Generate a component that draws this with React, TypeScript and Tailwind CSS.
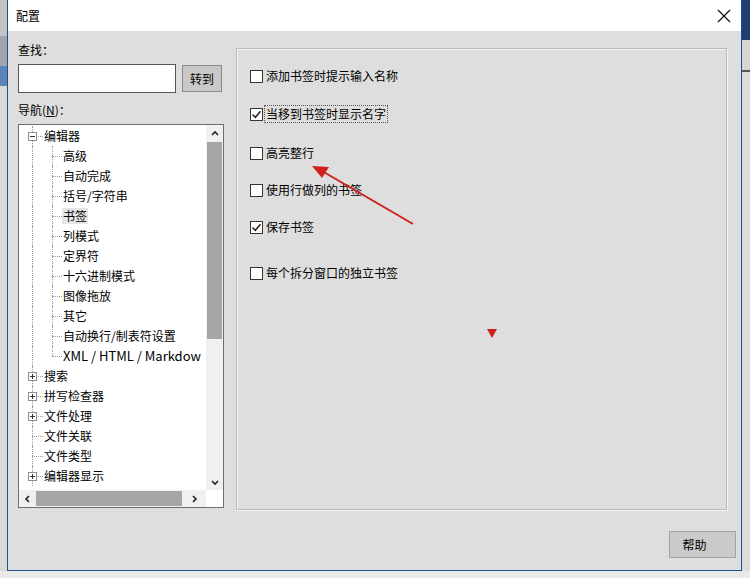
import React from "react";

const font = { fontFamily: '"Noto Sans CJK SC", "Noto Sans", sans-serif' };

type Node = { label: string; level: 0 | 1; box?: "minus" | "plus"; last?: boolean; selected?: boolean; latin?: boolean };

const nodes: Node[] = [
  { label: "编辑器", level: 0, box: "minus" },
  { label: "高级", level: 1 },
  { label: "自动完成", level: 1 },
  { label: "括号/字符串", level: 1 },
  { label: "书签", level: 1, selected: true },
  { label: "列模式", level: 1 },
  { label: "定界符", level: 1 },
  { label: "十六进制模式", level: 1 },
  { label: "图像拖放", level: 1 },
  { label: "其它", level: 1 },
  { label: "自动换行/制表符设置", level: 1 },
  { label: "XML / HTML / Markdow", level: 1, last: true, latin: true },
  { label: "搜索", level: 0, box: "plus" },
  { label: "拼写检查器", level: 0, box: "plus" },
  { label: "文件处理", level: 0, box: "plus" },
  { label: "文件关联", level: 0 },
  { label: "文件类型", level: 0 },
  { label: "编辑器显示", level: 0, box: "plus" },
];

function ExpandBox({ kind }: { kind: "minus" | "plus" }) {
  return (
    <div className="relative z-10 w-[9px] h-[9px] border border-[#8f8f8f] bg-white flex items-center justify-center">
      <div className="absolute w-[5px] h-px bg-[#333]" />
      {kind === "plus" && <div className="absolute w-px h-[5px] bg-[#333]" />}
    </div>
  );
}

function TreeRow({ n }: { n: Node }) {
  return (
    <div className="flex h-[20px] items-stretch whitespace-nowrap">
      <div className="relative w-[24px] shrink-0">
        <div className="absolute left-[13px] top-0 bottom-0 border-l border-dotted border-[#9a9a9a]" />
        {n.level === 0 && (
          <>
            <div className="absolute left-[13px] right-0 top-[10px] border-t border-dotted border-[#9a9a9a]" />
            {n.box && (
              <div className="absolute left-[9px] top-[6px]">
                <ExpandBox kind={n.box} />
              </div>
            )}
          </>
        )}
      </div>
      {n.level === 1 && (
        <div className="relative w-[19px] shrink-0">
          <div
            className={`absolute left-[9px] top-0 border-l border-dotted border-[#9a9a9a] ${n.last ? "h-[10px]" : "bottom-0"}`}
          />
          <div className="absolute left-[9px] right-0 top-[10px] border-t border-dotted border-[#9a9a9a]" />
        </div>
      )}
      <div className="flex items-center">
        <span
          className={`px-px leading-[16px] text-black ${n.latin ? "text-[13px]" : "text-[12px]"} ${n.selected ? "bg-[#e6e6e6]" : ""}`}
        >
          {n.label}
        </span>
      </div>
    </div>
  );
}

function Chevron({ dir }: { dir: "up" | "down" | "left" | "right" }) {
  const d =
    dir === "up"
      ? "M2 6 L5 3 L8 6"
      : dir === "down"
      ? "M2 4 L5 7 L8 4"
      : dir === "left"
      ? "M6 2 L3 5 L6 8"
      : "M4 2 L7 5 L4 8";
  return (
    <svg width="10" height="10" viewBox="0 0 10 10">
      <path d={d} fill="none" stroke="#222" strokeWidth="1.6" />
    </svg>
  );
}

function Checkbox({ checked, label, focus }: { checked?: boolean; label: string; focus?: boolean }) {
  return (
    <div className="flex items-center h-[20px]">
      <div className="w-[13px] h-[13px] border border-[#333] bg-white flex items-center justify-center shrink-0">
        {checked && (
          <svg width="11" height="11" viewBox="0 0 11 11">
            <path d="M1.5 5.5 L4.3 8.3 L9.5 2.2" fill="none" stroke="#222" strokeWidth="1.5" />
          </svg>
        )}
      </div>
      <span
        className={`ml-[2px] text-[12px] leading-[16px] text-black px-px ${focus ? "outline outline-1 outline-dotted outline-[#555]" : ""}`}
      >
        {label}
      </span>
    </div>
  );
}

export default function App() {
  return (
    <div className="relative w-[750px] h-[578px] overflow-hidden bg-[#e9e9e9] flex" style={font}>
      <div className="w-[7px] h-[571px] bg-[#d0d0d0] flex flex-col shrink-0">
        <div className="h-[36px] bg-[#c4c4c4]" />
        <div className="h-[30px] bg-[#9fa6ad]" />
        <div className="h-[20px] bg-[#5d86b8]" />
        <div className="flex-1 bg-[#d9d9d9]" />
      </div>

      <div className="w-[735px] h-[571px] shrink-0 border-l border-r border-b border-[#1f4f8c] flex flex-col bg-[#dedede]">
        <div className="h-[31px] bg-white flex items-center justify-between pl-[8px] pr-[8px] shrink-0">
          <span className="text-[12px] leading-[16px] text-black">配置</span>
          <svg width="14" height="14" viewBox="0 0 14 14" className="mr-[2px]">
            <path d="M1 1 L13 13 M13 1 L1 13" stroke="#111" strokeWidth="1.2" />
          </svg>
        </div>

        <div className="flex-1 flex flex-col">
          <div className="flex pl-[10px]">
            <div className="w-[206px] flex flex-col pt-[12px]">
              <div className="text-[12px] leading-[14px] text-black">查找：</div>
              <div className="mt-[7px] flex items-start">
                <div className="w-[158px] h-[29px] bg-white border border-[#555]" />
                <div className="ml-[6px] mt-px w-[40px] h-[27px] bg-[#c9c9c9] border border-[#8a8a8a] flex items-center justify-center text-[12px] text-black">
                  转到
                </div>
              </div>
              <div className="mt-[10px] text-[12px] leading-[14px] text-black">
                导航(<span className="underline">N</span>)：
              </div>
              <div className="mt-[7px] h-[384px] border border-[#6e6e6e] bg-white flex flex-col">
                <div className="flex flex-1 min-h-0">
                  <div className="flex-1 min-w-0 overflow-hidden pt-px">
                    {nodes.map((n, i) => (
                      <TreeRow key={i} n={n} />
                    ))}
                  </div>
                  <div className="w-[17px] bg-[#f0f0f0] flex flex-col items-center">
                    <div className="h-[17px] flex items-center justify-center">
                      <Chevron dir="up" />
                    </div>
                    <div className="w-[15px] h-[197px] bg-[#a6a6a6]" />
                    <div className="flex-1" />
                    <div className="h-[17px] flex items-center justify-center">
                      <Chevron dir="down" />
                    </div>
                  </div>
                </div>
                <div className="h-[17px] flex">
                  <div className="flex-1 bg-[#f0f0f0] flex items-center">
                    <div className="w-[17px] flex items-center justify-center">
                      <Chevron dir="left" />
                    </div>
                    <div className="w-[146px] h-[15px] bg-[#a6a6a6]" />
                    <div className="flex-1 flex items-center justify-center">
                      <Chevron dir="right" />
                    </div>
                  </div>
                  <div className="w-[17px] bg-white" />
                </div>
              </div>
            </div>

            <div className="ml-[12px] mt-[17px] w-[491px] h-[462px] border border-[#b9b9b9] shadow-[inset_1px_1px_0_#f4f4f4,1px_1px_0_#f4f4f4]">
              <div className="flex flex-col pl-[13px] pt-[17px]">
                <Checkbox label="添加书签时提示输入名称" />
                <div className="mt-[18px]">
                  <Checkbox checked focus label="当移到书签时显示名字" />
                </div>
                <div className="mt-[19px]">
                  <Checkbox label="高亮整行" />
                </div>
                <div className="mt-[17px]">
                  <Checkbox label="使用行做列的书签" />
                </div>
                <div className="mt-[17px]">
                  <Checkbox checked label="保存书签" />
                </div>
                <div className="mt-[26px]">
                  <Checkbox label="每个拆分窗口的独立书签" />
                </div>
              </div>
            </div>
          </div>

          <div className="flex justify-end pr-[5px] mt-[21px]">
            <div className="w-[67px] h-[27px] bg-[#cacaca] border border-[#a3a3a3] flex items-center justify-center text-[12px] text-black">
              <span className="mr-[16px]">帮助</span>
            </div>
          </div>
        </div>
      </div>

      <div className="flex-1 h-[571px] flex flex-col">
        <div className="h-[40px] bg-[#1d3f72]" />
        <div className="h-[30px] bg-[#d6d6d6]" />
        <div className="h-[2px] bg-[#555]" />
        <div className="flex-1 bg-[#dcdcdc]" />
      </div>

      <svg className="absolute left-0 top-0 pointer-events-none" width="750" height="578" viewBox="0 0 750 578">
        <line x1="413" y1="224" x2="322" y2="171" stroke="#d0201c" strokeWidth="2" />
        <polygon points="312,166 329,167 322,178" fill="#d0201c" />
        <polygon points="487,329 497,329 492,338" fill="#d0201c" />
      </svg>
    </div>
  );
}
